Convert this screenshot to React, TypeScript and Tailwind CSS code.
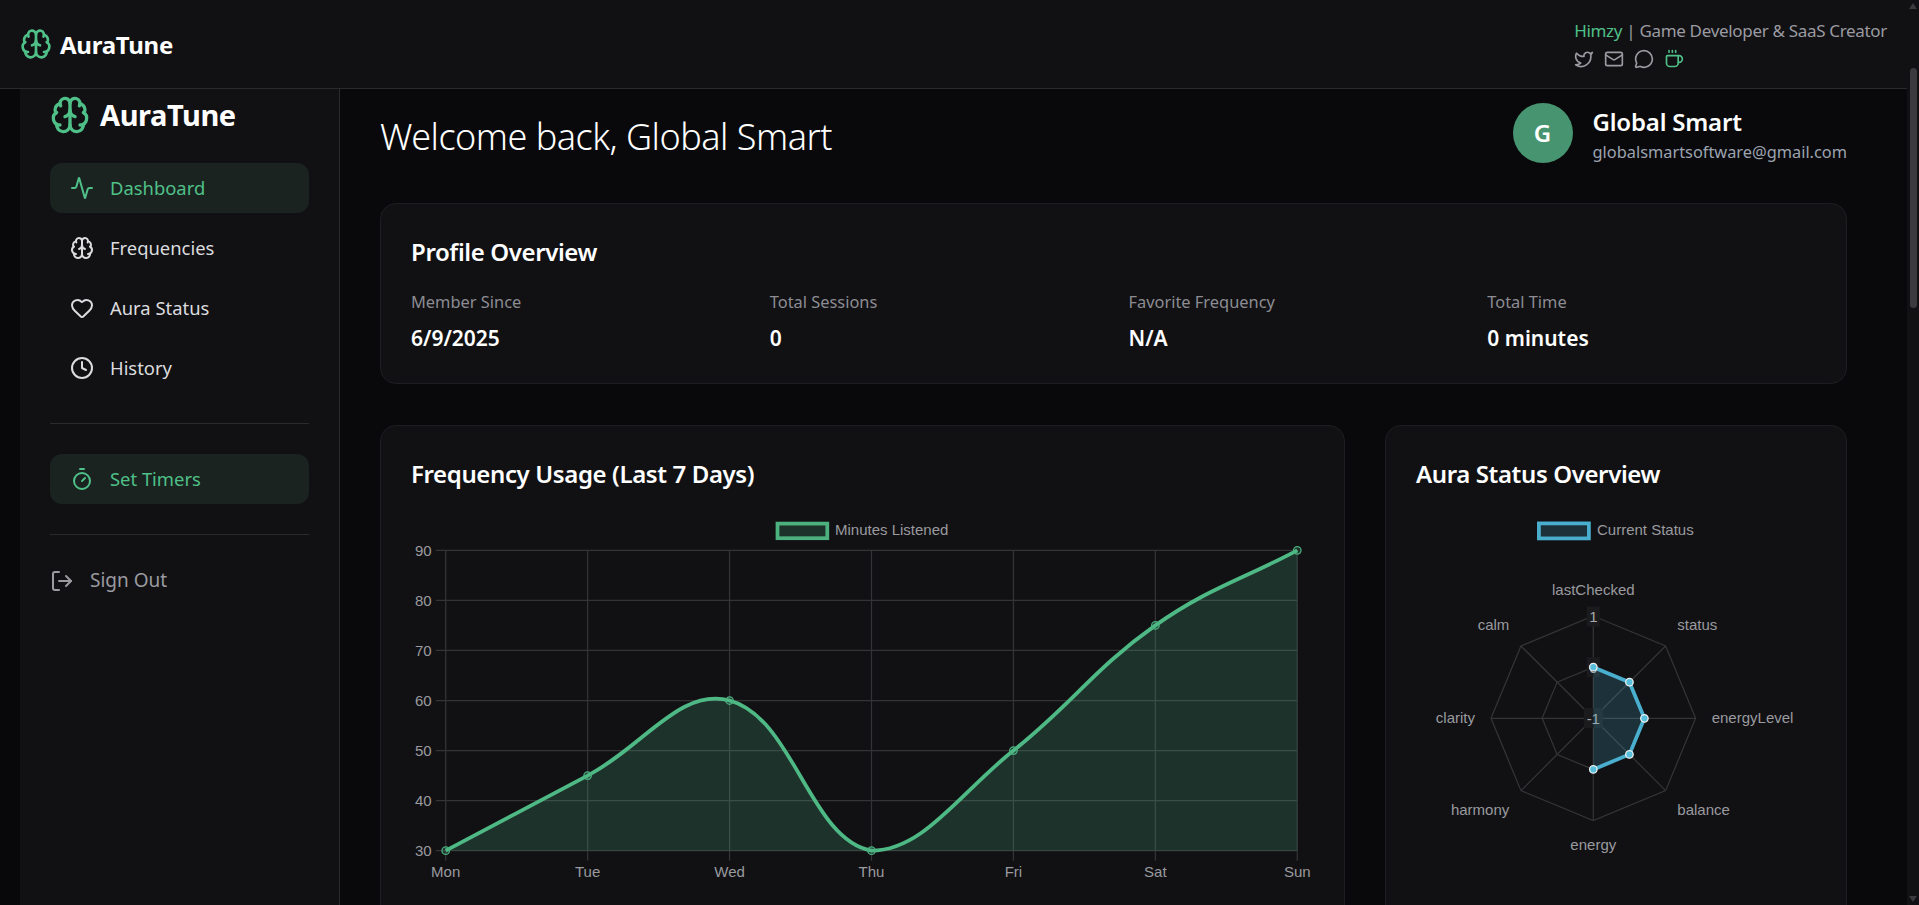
import { Activity, Brain, Heart, Clock, Timer, LogOut, Twitter, Mail, MessageCircle, Coffee } from "lucide-react";

const font = "font-['Noto_Sans','Open_Sans',sans-serif]";

function spline(pts: [number, number][], area: { l: number; r: number; t: number; b: number }) {
  const t = 0.4;
  const cps = pts.map((c, i) => {
    const p = pts[i - 1] ?? c;
    const n = pts[i + 1] ?? c;
    const d01 = Math.hypot(c[0] - p[0], c[1] - p[1]);
    const d12 = Math.hypot(n[0] - c[0], n[1] - c[1]);
    const s = d01 + d12 || 1;
    const fa = (t * d01) / s;
    const fb = (t * d12) / s;
    const clampX = (x: number) => Math.min(area.r, Math.max(area.l, x));
    const clampY = (y: number) => Math.min(area.b, Math.max(area.t, y));
    return {
      px: clampX(c[0] - fa * (n[0] - p[0])),
      py: clampY(c[1] - fa * (n[1] - p[1])),
      nx: clampX(c[0] + fb * (n[0] - p[0])),
      ny: clampY(c[1] + fb * (n[1] - p[1])),
    };
  });
  let d = `M${pts[0][0]} ${pts[0][1]}`;
  for (let i = 1; i < pts.length; i++) {
    d += ` C${cps[i - 1].nx} ${cps[i - 1].ny} ${cps[i].px} ${cps[i].py} ${pts[i][0]} ${pts[i][1]}`;
  }
  return d;
}

const tc = "#9a9a9f";
const grid = "#343437";
const fs = 15;

function LineChart() {
  const W = 903;
  const H = 400;
  const l = 34.7;
  const r = 886.3;
  const top = 50.3;
  const bottom = 350.7;
  const days = ["Mon", "Tue", "Wed", "Thu", "Fri", "Sat", "Sun"];
  const data = [30, 45, 60, 30, 50, 75, 90];
  const xs = days.map((_, i) => l + (i * (r - l)) / 6);
  const y = (v: number) => bottom - ((v - 30) / 60) * (bottom - top);
  const pts = data.map((v, i) => [xs[i], y(v)] as [number, number]);
  const line = spline(pts, { l, r, t: top, b: bottom });
  return (
    <svg width={W} height={H} className="block" style={{ fontFamily: "'Liberation Sans', sans-serif" }}>
      <rect x={366.5} y={23.6} width={49.8} height={14.6} fill="rgba(76,187,133,0.2)" stroke="#4cb07f" strokeWidth={3.75} />
      <text x={424} y={35} fontSize={fs} fill={tc}>Minutes Listened</text>
      {[30, 40, 50, 60, 70, 80, 90].map((v) => (
        <g key={v}>
          <line x1={l - 10} x2={r} y1={y(v)} y2={y(v)} stroke={grid} strokeWidth={1.25} />
          <text x={l - 14} y={y(v) + 5.5} textAnchor="end" fontSize={fs} fill={tc}>{v}</text>
        </g>
      ))}
      {days.map((d, i) => (
        <g key={d}>
          <line x1={xs[i]} x2={xs[i]} y1={top} y2={bottom + 10} stroke={grid} strokeWidth={1.25} />
          <text x={xs[i]} y={377} textAnchor="middle" fontSize={fs} fill={tc}>{d}</text>
        </g>
      ))}
      <path d={`${line} L${r} ${bottom} L${l} ${bottom} Z`} fill="rgba(76,187,133,0.2)" />
      <path d={line} fill="none" stroke="#4fb985" strokeWidth={3.75} />
      {pts.map((p, i) => (
        <circle key={i} cx={p[0]} cy={p[1]} r={3.75} fill="rgba(76,187,133,0.2)" stroke="#4cb07f" strokeWidth={1.25} />
      ))}
    </svg>
  );
}

function RadarChart() {
  const cx = 177.3;
  const cy = 218.3;
  const R = 102.3;
  const n = 8;
  const pt = (i: number, rad: number): [number, number] => {
    const a = (i * 2 * Math.PI) / n - Math.PI / 2;
    return [cx + rad * Math.cos(a), cy + rad * Math.sin(a)];
  };
  const ring = (rad: number) => Array.from({ length: n }, (_, i) => pt(i, rad).join(",")).join(" ");
  const dataPts = [0, 1, 2, 3, 4].map((i) => pt(i, 51.1));
  const dataStr = dataPts.map((p) => p.join(",")).join(" ");
  const labels: { t: string; x: number; y: number; a: "start" | "middle" | "end" }[] = [
    { t: "lastChecked", x: cx, y: 95, a: "middle" },
    { t: "status", x: 261.3, y: 130, a: "start" },
    { t: "energyLevel", x: 295.7, y: 223, a: "start" },
    { t: "balance", x: 261.3, y: 315, a: "start" },
    { t: "energy", x: cx, y: 350, a: "middle" },
    { t: "harmony", x: 93.3, y: 315, a: "end" },
    { t: "clarity", x: 59, y: 223, a: "end" },
    { t: "calm", x: 93.3, y: 130, a: "end" },
  ];
  return (
    <svg width={430} height={400} className="block" style={{ fontFamily: "'Liberation Sans', sans-serif" }}>
      <rect x={122.9} y={23.4} width={50} height={15} fill="rgba(76,181,212,0.2)" stroke="#4aafcf" strokeWidth={3.75} />
      <text x={181} y={35} fontSize={fs} fill={tc}>Current Status</text>
      <polygon points={ring(R)} fill="none" stroke={grid} strokeWidth={1.25} />
      <polygon points={ring(R / 2)} fill="none" stroke={grid} strokeWidth={1.25} />
      {Array.from({ length: n }, (_, i) => {
        const p = pt(i, R);
        return <line key={i} x1={cx} y1={cy} x2={p[0]} y2={p[1]} stroke={grid} strokeWidth={1.25} />;
      })}
      <rect x={cx - 6.5} y={106.5} width={13} height={20} fill="#1b1b1e" />
      <text x={cx} y={122} textAnchor="middle" fontSize={fs} fill="#a8a8ac">1</text>
      <rect x={cx - 6.5} y={157} width={13} height={20} fill="#1b1b1e" />
      <text x={cx} y={172.5} textAnchor="middle" fontSize={fs} fill="#a8a8ac">0</text>
      <rect x={cx - 9.5} y={208} width={19} height={20} fill="#1b1b1e" />
      <text x={cx} y={223.5} textAnchor="middle" fontSize={fs} fill="#a8a8ac">-1</text>
      <polygon points={dataStr} fill="rgba(76,181,212,0.2)" />
      <polyline points={dataStr} fill="none" stroke="#4aafcf" strokeWidth={3.75} />
      {dataPts.map((p, i) => (
        <circle key={i} cx={p[0]} cy={p[1]} r={3.75} fill="#57bfdc" stroke="#f0f0f0" strokeWidth={1.25} />
      ))}
      {labels.map((b) => (
        <text key={b.t} x={b.x} y={b.y} textAnchor={b.a} fontSize={fs} fill={tc}>{b.t}</text>
      ))}
    </svg>
  );
}

function NavItem({ icon: Icon, label, active }: { icon: typeof Brain; label: string; active?: boolean }) {
  return (
    <div className={`h-[50px] flex items-center gap-4 px-5 rounded-xl text-[18.4px] ${active ? "bg-[#1a2320] text-[#4fc088]" : "text-[#dcdcdf]"}`}>
      <Icon size={24} strokeWidth={2} className="shrink-0" />
      <span>{label}</span>
    </div>
  );
}

function Stat({ label, value }: { label: string; value: string }) {
  return (
    <div className="flex flex-col">
      <span className="text-[16.4px] leading-[24px] text-[#8c8c92]">{label}</span>
      <span className="text-[21px] leading-[30px] mt-[9px] font-semibold text-white">{value}</span>
    </div>
  );
}

export default function App() {
  return (
    <div className={`h-screen w-full overflow-hidden flex bg-[#09090c] text-white ${font}`}>
      <div className="flex-1 min-w-0 flex flex-col">
        <header className="h-[89px] shrink-0 bg-[#111114] border-b border-[#2a2a2d] flex items-center justify-between pl-5 pr-5">
          <div className="flex items-center gap-[8px]">
            <Brain size={32} strokeWidth={2} className="text-[#4fc088]" />
            <span className="text-[24px] font-bold pt-[2px] tracking-[-0.25px]">AuraTune</span>
          </div>
          <div className="flex flex-col gap-[6px]">
            <div className="text-[17px] leading-[24px] tracking-[-0.32px] text-[#9a9aa0]"><span className="text-[#4fc088]">Himzy</span> | Game Developer &amp; SaaS Creator</div>
            <div className="flex gap-[10px] text-[#9a9aa0]">
              <Twitter size={20} />
              <Mail size={20} />
              <MessageCircle size={20} />
              <Coffee size={20} className="text-[#4fc088]" />
            </div>
          </div>
        </header>
        <div className="flex-1 min-h-0 flex">
          <div className="w-5 shrink-0 bg-[#08080a]" />
          <aside className="w-[320px] shrink-0 bg-[#111114] border-r border-[#2a2a2d] px-[30px] pt-[6px]">
            <div className="flex items-center gap-[10px] h-[40px] text-[#4fc088]">
              <Brain size={40} strokeWidth={2} />
              <span className="text-[29px] font-bold text-white tracking-[-0.4px]">AuraTune</span>
            </div>
            <nav className="mt-[28px] flex flex-col gap-[10px]">
              <NavItem icon={Activity} label="Dashboard" active />
              <NavItem icon={Brain} label="Frequencies" />
              <NavItem icon={Heart} label="Aura Status" />
              <NavItem icon={Clock} label="History" />
            </nav>
            <div className="mt-[30px] mb-[30px] border-t border-[#2a2a2d]" />
            <NavItem icon={Timer} label="Set Timers" active />
            <div className="mt-[30px] mb-[30px] border-t border-[#2a2a2d]" />
            <div className="h-[31px] flex items-center gap-4 text-[19px] text-[#9a9aa0]">
              <LogOut size={24} className="shrink-0" />
              <span>Sign Out</span>
            </div>
          </aside>
          <main className="flex-1 min-w-0 pl-[40px] pr-[60px] pt-[14px] overflow-hidden">
            <div className="flex items-center justify-between h-[60px]">
              <h1 className="text-[36px] font-light text-white mt-[8px] tracking-[-0.5px]">Welcome back, Global Smart</h1>
              <div className="flex items-center gap-5">
                <div className="w-[60px] h-[60px] rounded-full bg-[#479470] flex items-center justify-center text-[24px] font-semibold">G</div>
                <div className="flex flex-col pt-[4px]">
                  <span className="text-[24px] leading-[32px] font-semibold tracking-[-0.2px]">Global Smart</span>
                  <span className="text-[16.35px] leading-[24px] mt-[2px] text-[#9ca3af]">globalsmartsoftware@gmail.com</span>
                </div>
              </div>
            </div>
            <section className="mt-[40px] h-[181px] rounded-2xl bg-[#111114] border border-[#1e1e22] p-[30px]">
              <h2 className="text-[24px] leading-[36px] font-semibold tracking-[-0.38px]">Profile Overview</h2>
              <div className="mt-[20px] grid grid-cols-4 gap-[30px]">
                <Stat label="Member Since" value="6/9/2025" />
                <Stat label="Total Sessions" value="0" />
                <Stat label="Favorite Frequency" value="N/A" />
                <Stat label="Total Time" value="0 minutes" />
              </div>
            </section>
            <div className="mt-[41px] flex gap-[40px]">
              <section className="w-[965px] shrink-0 h-[600px] rounded-2xl bg-[#111114] border border-[#1e1e22] pl-[30px] pt-[30px]">
                <h2 className="text-[24px] leading-[36px] font-semibold tracking-[-0.38px]">Frequency Usage (Last 7 Days)</h2>
                <div className="mt-[8px]"><LineChart /></div>
              </section>
              <section className="flex-1 min-w-0 h-[600px] rounded-2xl bg-[#111114] border border-[#1e1e22] pl-[30px] pt-[30px]">
                <h2 className="text-[24px] leading-[36px] font-semibold tracking-[-0.38px]">Aura Status Overview</h2>
                <div className="mt-[8px]"><RadarChart /></div>
              </section>
            </div>
          </main>
        </div>
      </div>
      <div className="w-3 shrink-0 bg-[#111114] flex flex-col items-center">
        <svg width={10} height={8} viewBox="0 0 10 8" className="mt-[2px] shrink-0"><polygon points="5,1 9,7 1,7" fill="#3a3a3f" /></svg>
        <div className="w-[7px] h-[240px] mt-[58px] rounded-full bg-[#3a3a3f] shrink-0" />
        <svg width={10} height={8} viewBox="0 0 10 8" className="mt-auto mb-[2px] shrink-0"><polygon points="1,1 9,1 5,7" fill="#3a3a3f" /></svg>
      </div>
    </div>
  );
}
